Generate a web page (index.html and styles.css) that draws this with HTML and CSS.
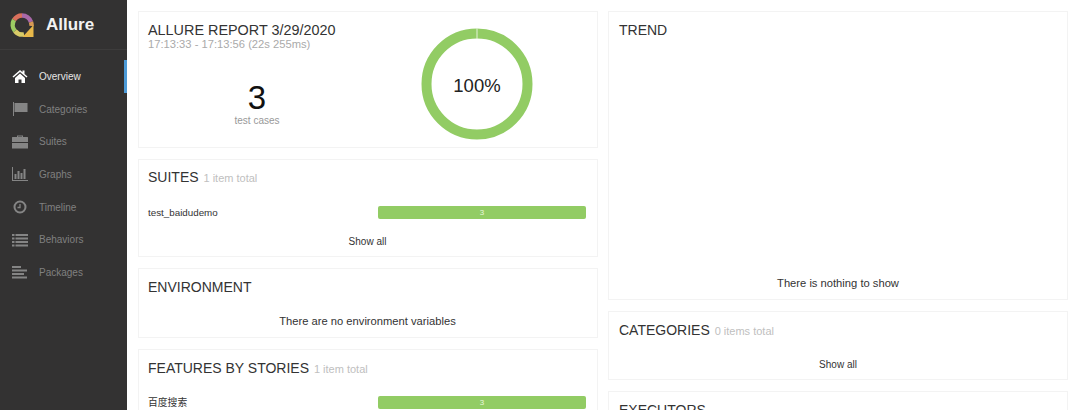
FILE: index.html
```html
<!DOCTYPE html>
<html lang="en">
<head>
    <meta charset="UTF-8">
    <title>Allure Report</title>
    <link rel="stylesheet" href="styles.css">
</head>
<body>
    <aside class="side-nav">
        <div class="brand">
            <svg class="brand-logo" width="26" height="26" viewBox="0 0 26 26">
                <path d="M13 3.500a9.500 9.500 0 0 1 9 6.500" fill="none" stroke="#a868a8" stroke-width="4.500"/>
                <path d="M13 3.500a9.500 9.500 0 0 0-8 4.500" fill="none" stroke="#d9705c" stroke-width="4.500"/>
                <path d="M5 8a9.500 9.500 0 0 0 1 11" fill="none" stroke="#9ccb62" stroke-width="4.500"/>
                <path d="M6 19a9.500 9.500 0 0 0 9 3.400" fill="none" stroke="#d8cb68" stroke-width="4.500"/>
                <path d="M22 10a9.500 9.500 0 0 1 .5 4" fill="none" stroke="#d89a55" stroke-width="4.500"/>
                <path d="M24.500 13v12h-11z" fill="#e8b84a"/>
            </svg>
            <span class="brand-name">Allure</span>
        </div>
        <nav class="menu">
            <a class="menu-item active">
                <svg class="menu-icon" width="16" height="14" viewBox="0 0 16 14"><path d="M8 1 0.500 7.500l1 1L8 3l6.500 5.500 1-1L12.500 5V1.500h-2v1.800zM3 9v5h3.500v-3.500h3V14H13V9L8 4.500z" fill="#fff"/></svg>
                <span>Overview</span>
            </a>
            <a class="menu-item">
                <svg class="menu-icon" width="16" height="14" viewBox="0 0 16 14"><path d="M1 0h1v14H1zM2.500 1h13v9h-13z" fill="#858585"/></svg>
                <span>Categories</span>
            </a>
            <a class="menu-item">
                <svg class="menu-icon" width="16" height="14" viewBox="0 0 16 14"><path d="M5 2V0.500h6V2h4.500a.5.5 0 0 1 .5.5V7H0V2.500a.5.5 0 0 1 .5-.5zM6 2h4V1.500H6zM0 8h16v5.500H0z" fill="#858585"/></svg>
                <span>Suites</span>
            </a>
            <a class="menu-item">
                <svg class="menu-icon" width="16" height="14" viewBox="0 0 16 14"><path d="M0 0h1v13h15v1H0zM2.500 7h2v5h-2zM5.500 4h2v8h-2zM8.500 6h2v6h-2zM11.500 2h2v10h-2z" fill="#858585"/></svg>
                <span>Graphs</span>
            </a>
            <a class="menu-item">
                <svg class="menu-icon" width="16" height="14" viewBox="0 0 16 14"><circle cx="8" cy="7" r="5.500" fill="none" stroke="#858585" stroke-width="2"/><path d="M8 4v3.500H5.500" fill="none" stroke="#858585" stroke-width="1.300"/></svg>
                <span>Timeline</span>
            </a>
            <a class="menu-item">
                <svg class="menu-icon" width="16" height="14" viewBox="0 0 16 14"><path d="M0 1h2.500v2H0zM3.500 1H16v2H3.500zM0 4.500h2.500v2H0zM3.500 4.500H16v2H3.500zM0 8h2.500v2H0zM3.500 8H16v2H3.500zM0 11.500h2.500v2H0zM3.500 11.500H16v2H3.500z" fill="#858585"/></svg>
                <span>Behaviors</span>
            </a>
            <a class="menu-item">
                <svg class="menu-icon" width="16" height="14" viewBox="0 0 16 14"><path d="M0 1h9v2H0zM0 4.500h15v2H0zM0 8h12v2H0zM0 11.500h15v2H0z" fill="#858585"/></svg>
                <span>Packages</span>
            </a>
        </nav>
    </aside>

    <main class="content">
        <div class="column">
            <section class="card summary">
                <div class="summary-left">
                    <h2 class="card-title report-title">ALLURE REPORT 3/29/2020</h2>
                    <div class="time-range">17:13:33 - 17:13:56 (22s 255ms)</div>
                    <div class="count">3</div>
                    <div class="count-label">test cases</div>
                </div>
                <div class="donut">
                    <svg width="112" height="112" viewBox="0 0 112 112">
                        <circle cx="56" cy="56" r="50.500" fill="none" stroke="#92cc64" stroke-width="10"/>
                        <path d="M56 0v11" stroke="#e4f2d8" stroke-width="1"/>
                    </svg>
                    <span class="donut-value">100%</span>
                </div>
            </section>

            <section class="card suites">
                <h2 class="card-title">SUITES <small>1 item total</small></h2>
                <div class="row">
                    <span class="row-name">test_baidudemo</span>
                    <div class="bar">3</div>
                </div>
                <div class="show-all">Show all</div>
            </section>

            <section class="card environment">
                <h2 class="card-title">ENVIRONMENT</h2>
                <div class="empty">There are no environment variables</div>
            </section>

            <section class="card features">
                <h2 class="card-title">FEATURES BY STORIES <small>1 item total</small></h2>
                <div class="row">
                    <span class="row-name">百度搜索</span>
                    <div class="bar">3</div>
                </div>
            </section>
        </div>

        <div class="column column-right">
            <section class="card trend">
                <h2 class="card-title">TREND</h2>
                <div class="empty">There is nothing to show</div>
            </section>

            <section class="card categories">
                <h2 class="card-title">CATEGORIES <small>0 items total</small></h2>
                <div class="show-all">Show all</div>
            </section>

            <section class="card executors">
                <h2 class="card-title">EXECUTORS</h2>
            </section>
        </div>
    </main>
</body>
</html>
```

FILE: styles.css
```css
html, body {
    height: 410px;
    margin: 0;
    overflow: hidden;
}
body {
    display: flex;
    font-family: "Liberation Sans", "Noto Sans CJK SC", sans-serif;
    background-color: #fff;
    color: #222;
}
.side-nav {
    width: 127px;
    flex: none;
    background-color: #333232;
}
.brand {
    display: flex;
    align-items: center;
    gap: 11px;
    height: 50px;
    padding-left: 9px;
    box-sizing: border-box;
    border-bottom: 1px solid #3d3c3c;
}
.brand-name {
    color: #f2f2f2;
    font-size: 17px;
    font-weight: bold;
}
.menu {
    padding-top: 10px;
}
.menu-item {
    display: flex;
    align-items: center;
    gap: 11px;
    height: 32.7px;
    padding-left: 12px;
    font-size: 10px;
    color: #808080;
}
.menu-item.active {
    color: #e6e6e6;
    box-shadow: inset -3px 0 0 #4d9bd8;
}
.content {
    flex: 1;
    display: grid;
    grid-template-columns: 460px 460px;
    column-gap: 10px;
    padding: 11px 0 0 11px;
    align-items: start;
}
.column {
    display: flex;
    flex-direction: column;
    gap: 11px;
}
.card {
    box-sizing: border-box;
    padding: 10px 10px 0 9px;
    background-color: #fff;
    border: 1px solid #f3f3f3;
    overflow: hidden;
}
.column-right .card {
    padding-left: 10px;
}
.card-title {
    margin: 0;
    font-size: 14px;
    font-weight: normal;
    line-height: 17px;
    color: #333;
}
.report-title {
    font-size: 14.400px;
}
.card-title small {
    font-size: 11px;
    color: #c0c0c0;
    margin-left: 1px;
}
.summary {
    height: 137px;
    display: flex;
}
.summary-left {
    width: 240px;
}
.time-range {
    font-size: 11.200px;
    line-height: 11px;
    color: #aaa;
}
.count {
    margin-top: 30px;
    width: 218px;
    text-align: center;
    font-size: 33px;
    line-height: 36px;
    color: #111;
}
.count-label {
    margin-top: -1px;
    width: 218px;
    text-align: center;
    font-size: 10px;
    line-height: 11px;
    color: #999;
}
.donut {
    position: relative;
    margin: 6px 0 0 33px;
    width: 112px;
    height: 112px;
}
.donut-value {
    position: absolute;
    inset: 4px 0 0;
    display: flex;
    align-items: center;
    justify-content: center;
    font-size: 18.500px;
    color: #222;
}
.suites {
    height: 98px;
    padding-top: 9px;
}
.row {
    display: flex;
    align-items: center;
    justify-content: space-between;
    margin: 18px 1px 0 0;
    height: 14px;
    font-size: 9.800px;
}
.features .row {
    margin-top: 17px;
}
.row-name {
    color: #333;
}
.bar {
    width: 208px;
    height: 13px;
    border-radius: 2px;
    background-color: #92cc64;
    color: #e8f5dc;
    font-size: 8px;
    line-height: 13px;
    text-align: center;
}
.show-all {
    margin-top: 17px;
    text-align: center;
    font-size: 10px;
    line-height: 12px;
    color: #333;
}
.environment {
    height: 70px;
}
.empty {
    text-align: center;
    font-size: 11.200px;
    line-height: 13px;
    color: #333;
}
.environment .empty {
    margin-top: 19px;
}
.features {
    height: 80px;
}
.trend {
    height: 289px;
}
.trend .empty {
    margin-top: 238px;
}
.categories {
    height: 69px;
}
.categories .show-all {
    margin-top: 19px;
}
.executors {
    height: 40px;
}
```
